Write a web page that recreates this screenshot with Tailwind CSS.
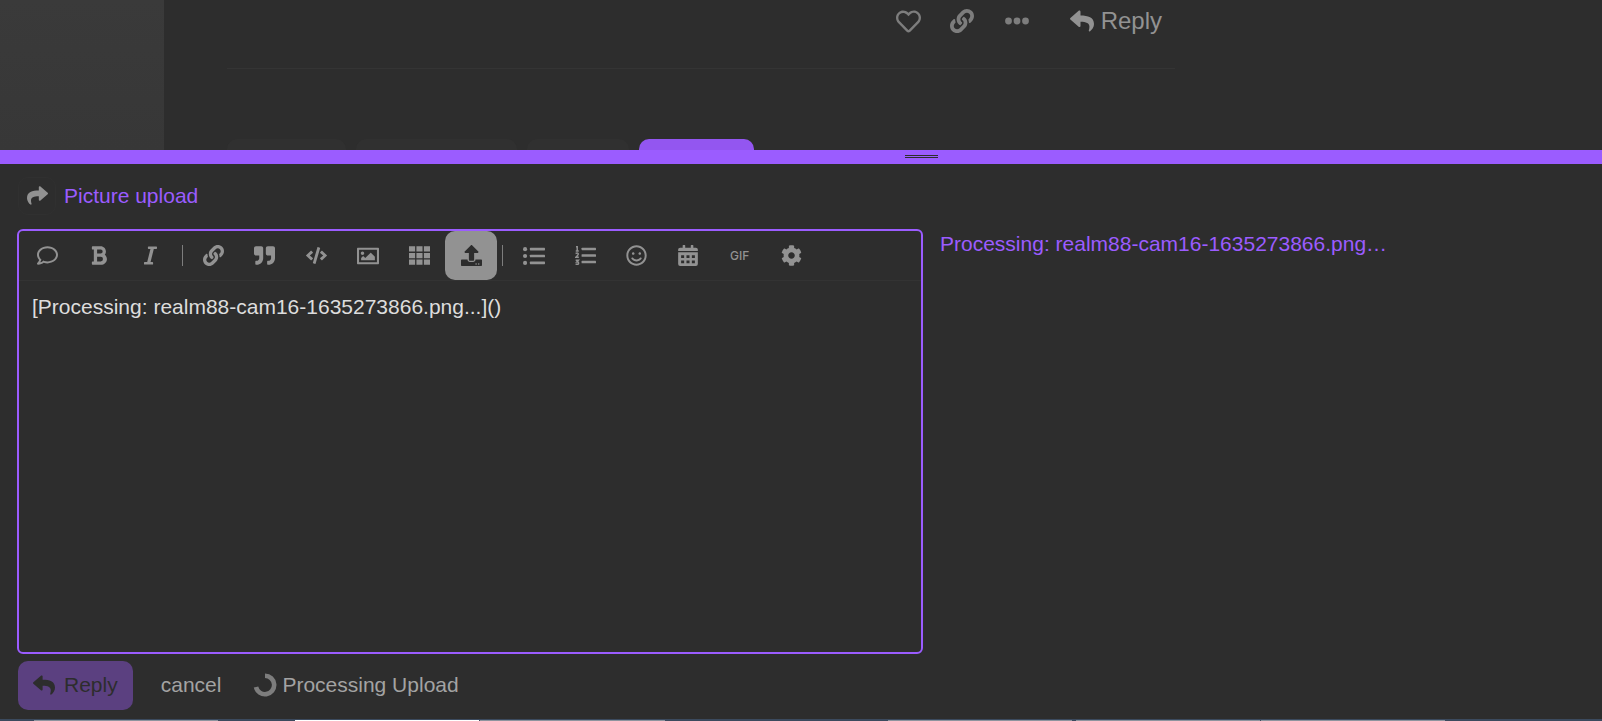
<!DOCTYPE html>
<html lang="en">
<head>
<meta charset="utf-8">
<meta name="viewport" content="width=device-width, initial-scale=1">
<title>Picture upload</title>
<script src="https://cdn.jsdelivr.net/npm/@tailwindcss/browser@4"></script>
</head>
<body class="flex h-screen flex-col overflow-hidden bg-[#2d2d2d] font-['Liberation_Sans',Arial,sans-serif] text-[21px] text-[#a3a3a3]">

<svg class="hidden" aria-hidden="true">
  <symbol id="reply" viewBox="0 0 512 512"><path d="M8.309 189.836L184.313 37.851C199.719 24.546 224 35.347 224 56.015v80.053c160.629 1.839 288 34.032 288 186.258 0 61.441-39.581 122.309-83.333 154.132-13.653 9.931-33.111-2.533-28.077-18.631 45.344-145.012-21.507-183.51-176.59-185.742V360c0 20.7-24.3 31.453-39.687 18.164l-176.004-152c-11.071-9.562-11.086-26.753 0-36.328z"/></symbol>
  <symbol id="link" viewBox="0 0 512 512"><path d="M326.612 185.391c59.747 59.809 58.927 155.698.36 214.59-.11.12-.24.25-.36.37l-67.2 67.2c-59.27 59.27-155.699 59.262-214.96 0-59.27-59.26-59.27-155.7 0-214.96l37.106-37.106c9.84-9.84 26.786-3.3 27.294 10.606.648 17.722 3.826 35.527 9.69 52.721 1.986 5.822.567 12.262-3.783 16.612l-13.087 13.087c-28.026 28.026-28.905 73.66-1.155 101.96 28.024 28.579 74.086 28.749 102.325.51l67.2-67.19c28.191-28.191 28.073-73.757 0-101.83-3.701-3.694-7.429-6.564-10.341-8.569a16.037 16.037 0 0 1-6.947-12.606c-.396-10.567 3.348-21.456 11.698-29.806l21.054-21.055c5.521-5.521 14.182-6.199 20.584-1.731a152.482 152.482 0 0 1 20.522 17.197zM467.547 44.449c-59.261-59.262-155.69-59.27-214.96 0l-67.2 67.2c-.12.12-.25.25-.36.37-58.566 58.892-59.387 154.781.36 214.59a152.454 152.454 0 0 0 20.521 17.196c6.402 4.468 15.064 3.789 20.584-1.731l21.054-21.055c8.35-8.35 12.094-19.239 11.698-29.806a16.037 16.037 0 0 0-6.947-12.606c-2.912-2.005-6.64-4.875-10.341-8.569-28.073-28.073-28.191-73.639 0-101.83l67.2-67.19c28.239-28.239 74.3-28.069 102.325.51 27.75 28.3 26.872 73.934-1.155 101.96l-13.087 13.087c-4.35 4.35-5.769 10.79-3.783 16.612 5.864 17.194 9.042 34.999 9.69 52.721.509 13.906 17.454 20.446 27.294 10.606l37.106-37.106c59.271-59.259 59.271-155.699.001-214.959z"/></symbol>
</svg>

<!-- Topic behind the composer -->
<main class="flex h-[150px] shrink-0 overflow-hidden">
  <aside class="w-[164px] shrink-0 bg-gradient-to-b from-[#3a3a3a] to-[#373737]"></aside>
  <div class="ml-[63px] flex w-full max-w-[948px] flex-col">
    <div class="flex h-[68px] items-start justify-end border-b border-[#343434] pr-[13px] text-[#7d7d7d] box-content">
      <div class="flex h-[42px] items-center">
        <button type="button" aria-label="Like" class="mr-[29px]"><svg class="size-[25px] fill-current" viewBox="0 0 512 512"><path d="M458.4 64.3C400.6 15.7 311.3 23 256 79.3 200.7 23 111.4 15.6 53.6 64.3-21.6 127.6-10.6 230.8 43 285.5l175.4 178.7c10 10.2 23.4 15.9 37.6 15.9 14.3 0 27.6-5.6 37.6-15.8L469 285.6c53.5-54.7 64.7-157.9-10.6-221.3zm-23.6 187.5L259.4 430.5c-2.4 2.4-4.4 2.4-6.8 0L77.2 251.8c-36.5-37.2-43.9-107.6 7.3-150.7 38.9-32.7 98.9-27.8 136.5 10.5l35 35.7 35-35.7c37.8-38.5 97.8-43.2 136.5-10.6 51.1 43.1 43.5 113.9 7.3 150.8z"/></svg></button>
        <button type="button" aria-label="Copy link" class="mr-[31px]"><svg class="size-6 fill-current"><use href="#link"/></svg></button>
        <button type="button" aria-label="Show more" class="mr-[41px]"><svg class="size-6 fill-current" viewBox="0 0 24 24"><circle cx="3.5" cy="12" r="3.4"/><circle cx="12" cy="12" r="3.4"/><circle cx="20.5" cy="12" r="3.4"/></svg></button>
        <button type="button" class="flex items-center gap-[7px] text-2xl text-[#929292]"><svg class="size-6 fill-current"><use href="#reply"/></svg>Reply</button>
      </div>
    </div>
    <div class="mt-auto flex h-[11px] gap-[10px]">
      <div class="w-[119px] rounded-t-[10px] bg-[#303030]"></div>
      <div class="w-[161px] rounded-t-[10px] bg-[#303030]"></div>
      <div class="w-[102px] rounded-t-[10px] bg-[#303030]"></div>
      <div class="w-[115px] rounded-t-[10px] bg-[#9356f0]"></div>
    </div>
  </div>
</main>

<!-- Resize handle -->
<div class="flex h-[14px] shrink-0 bg-[#9b5cff] pt-[5px]">
  <div class="ml-[56.5%] h-[3px] w-[33px] border-y border-[#2d2d2d]"></div>
</div>

<!-- Composer -->
<section class="flex min-h-0 flex-1 flex-col px-[17px] pb-[9px]">
  <header class="flex h-[65px] items-center pb-[2px] pl-px">
    <button type="button" aria-label="Reply options" class="mr-2 flex size-[38px] items-center justify-center rounded-[10px] border border-[#303030]"><svg class="size-[21px] fill-[#929292]" viewBox="0 0 512 512"><path d="M503.691 189.836L327.687 37.851C312.281 24.546 288 35.347 288 56.015v80.053C127.371 137.907 0 170.1 0 322.326c0 61.441 39.581 122.309 83.333 154.132 13.653 9.931 33.111-2.533 28.077-18.631C66.066 312.814 132.917 274.316 288 272.085V360c0 20.7 24.3 31.453 39.687 18.164l176.004-152c11.071-9.562 11.086-26.753 0-36.328z"/></svg></button>
    <a href="#" class="text-[#9b5cff]">Picture upload</a>
  </header>

  <div class="grid min-h-0 flex-1 grid-cols-[906fr_645fr] gap-[17px]">
    <div class="flex min-h-0 flex-col rounded-[6px] border-2 border-[#9b5cff]">
      <div class="border-b border-[#333333] pl-[3px]">
        <div class="flex h-[49px] max-w-[795px] items-stretch text-[#929292]" role="toolbar" aria-label="Formatting">
          <button type="button" aria-label="Toggle comment" class="flex flex-1 items-center justify-center"><svg class="size-[21px] fill-current" viewBox="0 0 512 512"><path d="M256 32C114.6 32 0 125.1 0 240c0 47.6 19.9 91.2 52.9 126.3C38 405.7 7 439.1 6.5 439.5c-6.6 7-8.4 17.2-4.6 26S14.4 480 24 480c61.5 0 110-25.7 139.1-46.3C192 442.8 223.2 448 256 448c141.4 0 256-93.1 256-208S397.4 32 256 32zm0 368c-26.7 0-53.1-4.1-78.4-12.1l-22.7-7.2-19.5 13.8c-14.3 10.1-33.9 21.4-57.5 29 7.3-12.1 14.4-25.7 19.9-40.2l10.6-28.1-20.6-21.8C69.7 314.1 48 282.2 48 240c0-88.2 93.3-160 208-160s208 71.8 208 160-93.3 160-208 160z"/></svg></button>
          <button type="button" aria-label="Bold" class="flex flex-1 items-center justify-center"><svg class="h-[21px] w-4 fill-current" viewBox="0 0 384 512"><path d="M333.49 238a122 122 0 0 0 27-65.21C367.87 96.49 308 32 233.42 32H34a16 16 0 0 0-16 16v48a16 16 0 0 0 16 16h31.87v288H34a16 16 0 0 0-16 16v48a16 16 0 0 0 16 16h209.32c70.8 0 134.14-51.75 141-122.4 4.74-48.45-16.39-92.06-50.83-119.6zM145.66 112h87.76a48 48 0 0 1 0 96h-87.76zm87.76 288h-87.76V288h87.76a56 56 0 0 1 0 112z"/></svg></button>
          <button type="button" aria-label="Italic" class="flex flex-1 items-center justify-center"><svg class="h-[21px] w-[13px] fill-current" viewBox="0 0 320 512"><path d="M320 48v32a16 16 0 0 1-16 16h-62.76l-80 320H208a16 16 0 0 1 16 16v32a16 16 0 0 1-16 16H16a16 16 0 0 1-16-16v-32a16 16 0 0 1 16-16h62.76l80-320H112a16 16 0 0 1-16-16V48a16 16 0 0 1 16-16h192a16 16 0 0 1 16 16z"/></svg></button>
          <div class="mx-[5px] my-auto h-[21px] w-px bg-[#7d7d7d]"></div>
          <button type="button" aria-label="Hyperlink" class="flex flex-1 items-center justify-center"><svg class="size-[21px] fill-current"><use href="#link"/></svg></button>
          <button type="button" aria-label="Blockquote" class="flex flex-1 items-center justify-center"><svg class="size-[21px] fill-current" viewBox="0 0 512 512"><path d="M464 32H336c-26.5 0-48 21.5-48 48v128c0 26.5 21.5 48 48 48h80v64c0 35.3-28.7 64-64 64h-8c-13.3 0-24 10.7-24 24v48c0 13.3 10.7 24 24 24h8c88.4 0 160-71.6 160-160V80c0-26.5-21.5-48-48-48zm-288 0H48C21.5 32 0 53.5 0 80v128c0 26.5 21.5 48 48 48h80v64c0 35.3-28.7 64-64 64h-8c-13.3 0-24 10.7-24 24v48c0 13.3 10.7 24 24 24h8c88.4 0 160-71.6 160-160V80c0-26.5-21.5-48-48-48z"/></svg></button>
          <button type="button" aria-label="Code" class="flex flex-1 items-center justify-center"><svg class="h-[21px] w-[21px] fill-current" viewBox="0 0 640 512"><path d="M278.9 511.5l-61-17.7c-6.4-1.8-10-8.5-8.2-14.9L346.2 8.7c1.8-6.4 8.5-10 14.9-8.2l61 17.7c6.4 1.8 10 8.5 8.2 14.9L293.8 503.3c-1.9 6.4-8.5 10.1-14.9 8.2zm-114-112.2l43.5-46.4c4.6-4.9 4.3-12.7-.8-17.2L117 256l90.6-79.7c5.1-4.5 5.5-12.3.8-17.2l-43.5-46.4c-4.5-4.8-12.1-5.1-17-.5L3.8 247.2c-5.1 4.7-5.1 12.8 0 17.5l144.1 135.1c4.9 4.6 12.5 4.4 17-.5zm327.2.6l144.1-135.1c5.1-4.7 5.1-12.8 0-17.5L492.1 112.1c-4.8-4.5-12.4-4.3-17 .5L431.6 159c-4.6 4.9-4.3 12.7.8 17.2L523 256l-90.6 79.7c-5.1 4.5-5.5 12.3-.8 17.2l43.5 46.4c4.5 4.9 12.1 5.1 17 .6z"/></svg></button>
          <button type="button" aria-label="Image" class="flex flex-1 items-center justify-center"><svg class="size-[22px] fill-current" viewBox="0 0 512 512"><path d="M488 64H24C10 64 0 74 0 88v336c0 14 10 24 24 24h464c14 0 24-10 24-24V88c0-14-10-24-24-24zm-30 336H54a6 6 0 0 1-6-6V118a6 6 0 0 1 6-6h404a6 6 0 0 1 6 6v276a6 6 0 0 1-6 6zM128 152c-22.091 0-40 17.909-40 40s17.909 40 40 40 40-17.909 40-40-17.909-40-40-40zM96 352h320v-80l-87.515-87.515c-4.686-4.686-12.284-4.686-16.971 0L192 304l-39.515-39.515c-4.686-4.686-12.284-4.686-16.971 0L96 304v48z"/></svg></button>
          <button type="button" aria-label="Table" class="flex flex-1 items-center justify-center"><svg class="size-[21px] fill-current" viewBox="0 0 512 512"><path d="M0 32h149v128H0zM181 32h149v128H181zM363 32h149v128H363zM0 192h149v128H0zM181 192h149v128H181zM363 192h149v128H363zM0 352h149v128H0zM181 352h149v128H181zM363 352h149v128H363z"/></svg></button>
          <button type="button" aria-label="Upload" class="flex flex-1 items-center justify-center rounded-[10px] bg-[#929292] text-[#2d2d2d]"><svg class="size-[21px] fill-current" viewBox="0 0 512 512"><path d="M296 384h-80c-13.3 0-24-10.7-24-24V192h-87.7c-17.8 0-26.7-21.5-14.1-34.1L242.3 5.7c7.5-7.5 19.8-7.5 27.3 0l152.2 152.2c12.6 12.6 3.7 34.1-14.1 34.1H320v168c0 13.3-10.7 24-24 24zm216-8v112c0 13.3-10.7 24-24 24H24c-13.3 0-24-10.7-24-24V376c0-13.3 10.7-24 24-24h136v8c0 30.9 25.1 56 56 56h80c30.9 0 56-25.1 56-56v-8h136c13.3 0 24 10.7 24 24zm-124 88c0-11-9-20-20-20s-20 9-20 20 9 20 20 20 20-9 20-20zm64 0c0-11-9-20-20-20s-20 9-20 20 9 20 20 20 20-9 20-20z"/></svg></button>
          <div class="mx-[5px] my-auto h-[21px] w-px bg-[#7d7d7d]"></div>
          <button type="button" aria-label="Bulleted list" class="flex flex-1 items-center justify-center"><svg class="size-[22px] fill-current" viewBox="0 0 512 512"><circle cx="48" cy="96" r="48"/><circle cx="48" cy="256" r="48"/><circle cx="48" cy="416" r="48"/><rect x="160" y="66" width="352" height="60" rx="14"/><rect x="160" y="226" width="352" height="60" rx="14"/><rect x="160" y="386" width="352" height="60" rx="14"/></svg></button>
          <button type="button" aria-label="Numbered list" class="flex flex-1 items-center justify-center"><svg class="size-[21px] fill-current" viewBox="0 0 512 512"><rect x="160" y="66" width="352" height="60" rx="14"/><rect x="160" y="226" width="352" height="60" rx="14"/><rect x="160" y="386" width="352" height="60" rx="14"/><path fill="none" stroke="currentColor" stroke-width="36" d="M24 44h30v98M18 144h74M14 206q66-24 66 16 0 22-58 76h72M16 370h66l-38 42q44-2 44 30 0 42-74 22"/></svg></button>
          <button type="button" aria-label="Emoji" class="flex flex-1 items-center justify-center"><svg class="size-[21px] fill-current" viewBox="0 0 496 512"><path d="M248 8C111 8 0 119 0 256s111 248 248 248 248-111 248-248S385 8 248 8zm0 448c-110.3 0-200-89.7-200-200S137.7 56 248 56s200 89.7 200 200-89.7 200-200 200zm-80-216c17.7 0 32-14.3 32-32s-14.3-32-32-32-32 14.3-32 32 14.3 32 32 32zm160 0c17.7 0 32-14.3 32-32s-14.3-32-32-32-32 14.3-32 32 14.3 32 32 32zm4 72.6c-20.8 25-51.5 39.4-84 39.4s-63.2-14.3-84-39.4c-8.5-10.2-23.7-11.5-33.8-3.1-10.2 8.5-11.5 23.6-3.1 33.8 30 36 74.1 56.6 120.9 56.6s90.9-20.6 120.9-56.6c8.5-10.2 7.1-25.3-3.1-33.8-10.1-8.4-25.3-7.1-33.8 3.1z"/></svg></button>
          <button type="button" aria-label="Insert date" class="flex flex-1 items-center justify-center"><svg class="h-[21px] w-5 fill-current" viewBox="0 0 480 512"><path fill-rule="evenodd" d="M0 176h480v288a48 48 0 0 1-48 48H48a48 48 0 0 1-48-48zM72 248v68h74v-68zM203 248v68h74v-68zM334 248v68h74v-68zM72 378v68h74v-68zM203 378v68h74v-68zM334 378v68h74v-68z"/><path d="M0 146v-34a48 48 0 0 1 48-48h62V14a14 14 0 0 1 14-14h34a14 14 0 0 1 14 14v50h136V14a14 14 0 0 1 14-14h34a14 14 0 0 1 14 14v50h62a48 48 0 0 1 48 48v34z"/></svg></button>
          <button type="button" class="flex flex-1 items-center justify-center font-[Inter,sans-serif] text-xs font-medium">GIF</button>
          <button type="button" aria-label="Options" class="flex flex-1 items-center justify-center"><svg class="size-[21px] fill-current" viewBox="0 0 512 512"><path d="M487.4 315.7l-42.6-24.6c4.3-23.2 4.3-47 0-70.2l42.6-24.6c4.9-2.8 7.1-8.6 5.5-14-11.1-35.6-30-67.8-54.7-94.6-3.8-4.1-10-5.1-14.8-2.3L380.8 110c-17.9-15.4-38.5-27.3-60.8-35.1V25.8c0-5.6-3.9-10.5-9.4-11.7-36.7-8.2-74.3-7.8-109.2 0-5.5 1.2-9.4 6.1-9.4 11.7V75c-22.2 7.9-42.8 19.8-60.8 35.1L88.7 85.5c-4.9-2.8-11-1.9-14.8 2.3-24.7 26.7-43.6 58.9-54.7 94.6-1.7 5.4.6 11.2 5.5 14L67.3 221c-4.3 23.2-4.3 47 0 70.2l-42.6 24.6c-4.9 2.8-7.1 8.6-5.5 14 11.1 35.6 30 67.8 54.7 94.6 3.8 4.1 10 5.1 14.8 2.3l42.6-24.6c17.9 15.4 38.5 27.3 60.8 35.1v49.2c0 5.6 3.9 10.5 9.4 11.7 36.7 8.2 74.3 7.8 109.2 0 5.5-1.2 9.4-6.1 9.4-11.7v-49.2c22.2-7.9 42.8-19.8 60.8-35.1l42.6 24.6c4.9 2.8 11 1.9 14.8-2.3 24.7-26.7 43.6-58.9 54.7-94.6 1.5-5.5-.7-11.3-5.6-14.1zM256 336c-44.1 0-80-35.9-80-80s35.9-80 80-80 80 35.9 80 80-35.9 80-80 80z"/></svg></button>
        </div>
      </div>
      <textarea aria-label="Reply text" class="min-h-0 w-full flex-1 resize-none bg-transparent px-[13px] py-3 leading-7 text-[#dddddd] outline-none">[Processing: realm88-cam16-1635273866.png...]()</textarea>
    </div>
    <div class="leading-[30px] text-[#9b5cff]"><p>Processing: realm88-cam16-1635273866.png…</p></div>
  </div>

  <footer class="mt-[7px] flex h-[49px] shrink-0 items-stretch">
    <button type="button" class="ml-px flex items-center gap-[9px] rounded-[10px] bg-[#5b4080] px-[15px] pb-[2px] text-[#2d2d2d]"><svg class="size-[22px] fill-current"><use href="#reply"/></svg>Reply</button>
    <button type="button" class="ml-7 pb-[2px]">cancel</button>
    <div class="ml-8 flex items-center gap-[5px] pb-[2px]" role="status">
      <svg class="size-6" viewBox="0 0 24 24" fill="none" stroke="#7d7d7d" stroke-width="4.6"><path d="M12 2.8a9.2 9.2 0 1 1-9 11.2"/></svg>
      <span>Processing Upload</span>
    </div>
  </footer>
</section>

<!-- Taskbar edge -->
<div class="flex h-[2px] shrink-0 items-end bg-[#3b4a5e]">
  <div class="ml-[34px] h-px w-[184px] bg-[#8d949e]"></div>
  <div class="ml-[77px] h-px w-[184px] bg-white"></div>
  <div class="ml-px h-px w-[185px] bg-[#8d949e]"></div>
  <div class="ml-[223px] h-px w-[184px] bg-[#8d949e]"></div>
  <div class="ml-1 h-px w-[184px] bg-[#8d949e]"></div>
  <div class="ml-px h-px w-[184px] bg-[#8d949e]"></div>
</div>
</body>
</html>
